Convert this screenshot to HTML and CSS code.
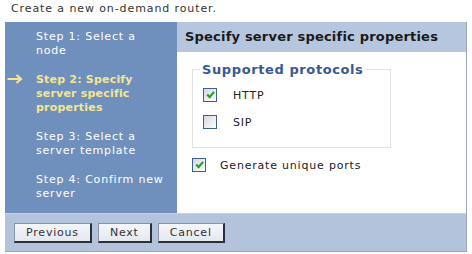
FILE: index.html
```html
<!DOCTYPE html>
<html>
<head>
<meta charset="utf-8">
<link rel="stylesheet" href="styles.css">
</head>
<body>
<div class="intro">Create a new on-demand router.</div>
<div class="wizard">
  <div class="main">
    <div class="steps">
      <div class="step">Step 1: Select a node</div>
      <div class="step current"><svg class="arrow" viewBox="0 0 16 10"><path d="M0.5 5 H14 M9.5 1 L14 5 L9.5 9" /></svg>Step 2: Specify server specific properties</div>
      <div class="step">Step 3: Select a server template</div>
      <div class="step">Step 4: Confirm new server</div>
    </div>
    <div class="content">
      <div class="header">Specify server specific properties</div>
      <div class="body">
        <fieldset class="protocols">
          <legend>Supported protocols</legend>
          <div class="opt"><span class="cb checked"><svg viewBox="0 0 10 10"><path d="M2 5 L4.2 7.3 L8.3 2.6" /></svg></span><span class="lbl">HTTP</span></div>
          <div class="opt"><span class="cb"></span><span class="lbl">SIP</span></div>
        </fieldset>
        <div class="opt gen"><span class="cb checked"><svg viewBox="0 0 10 10"><path d="M2 5 L4.2 7.3 L8.3 2.6" /></svg></span><span class="lbl">Generate unique ports</span></div>
      </div>
    </div>
  </div>
  <div class="footer">
    <button class="btn">Previous</button>
    <button class="btn">Next</button>
    <button class="btn">Cancel</button>
  </div>
</div>
</body>
</html>
```

FILE: styles.css
```css
body {
  margin: 0;
  background: #ffffff;
  font-family: "DejaVu Sans", Verdana, sans-serif;
  font-size: 11px;
  color: #333333;
}
.intro {
  padding: 2px 0 0 11px;
  height: 18px;
  font-size: 11px;
  line-height: 14px;
  letter-spacing: 0.9px;
}
.wizard {
  margin: 2px 0 0 5px;
  width: 462px;
  border: 1px solid #9aa8bd;
  border-top: none;
  border-left: none;
  box-sizing: border-box;
}
.main {
  display: flex;
  height: 191px;
}
.steps {
  width: 172px;
  background: #6f8fbd;
  padding: 8px 0 0 0;
  box-sizing: border-box;
}
.step {
  position: relative;
  padding: 0 8px 0 31px;
  color: #ffffff;
  font-size: 11px;
  line-height: 14px;
  letter-spacing: 0.8px;
  margin-bottom: 15px;
}
.step.current {
  color: #f4e690;
  font-weight: bold;
  letter-spacing: 0.2px;
}
.arrow {
  position: absolute;
  left: 2px;
  top: 1px;
  width: 16px;
  height: 10px;
}
.arrow path {
  fill: none;
  stroke: #f4e690;
  stroke-width: 2.2;
}
.content {
  flex: 1;
  background: #ffffff;
  display: flex;
  flex-direction: column;
}
.header {
  background: #b6c6de;
  height: 30px;
  line-height: 30px;
  padding-left: 8px;
  font-weight: bold;
  font-size: 13px;
  letter-spacing: 0.2px;
  color: #1a1a1a;
}
.body {
  padding: 10px 0 0 15px;
}
.protocols {
  margin: 0;
  width: 199px;
  height: 86px;
  box-sizing: border-box;
  border: 1px solid #e2e2e2;
  padding: 4px 0 0 10px;
}
.protocols legend {
  color: #3a5890;
  font-weight: bold;
  font-size: 13px;
  letter-spacing: 0.6px;
  padding: 0 2px;
  margin-left: -3px;
}
.opt {
  display: flex;
  align-items: center;
  height: 27px;
}
.cb {
  width: 12px;
  height: 12px;
  border: 1px solid #3f5f8f;
  background: linear-gradient(135deg, #d4d8df, #ffffff);
  display: flex;
  align-items: center;
  justify-content: center;
  flex: none;
}
.cb svg {
  width: 11px;
  height: 11px;
}
.cb svg path {
  fill: none;
  stroke: #2aa02a;
  stroke-width: 2;
}
.lbl {
  margin-left: 16px;
  font-size: 11px;
  color: #222222;
  letter-spacing: 0.8px;
  padding-top: 2px;
}
.gen {
  margin-top: 3px;
  margin-left: 0;
}
.gen .lbl {
  margin-left: 14px;
}
.footer {
  background: #b4c3dc;
  height: 37px;
  display: flex;
  align-items: center;
  gap: 6px;
  padding-left: 9px;
  border-top: 1px solid #c8d3e5;
}
.btn {
  font-family: "DejaVu Sans", Verdana, sans-serif;
  font-size: 11px;
  color: #333333;
  background: linear-gradient(#f4f6fa, #e4e8f0);
  border: 1px solid #8a94a6;
  border-right: 2px solid #2a2f3a;
  border-bottom: 2px solid #2a2f3a;
  height: 20px;
  padding: 0 11px;
  letter-spacing: 0.8px;
}
```
